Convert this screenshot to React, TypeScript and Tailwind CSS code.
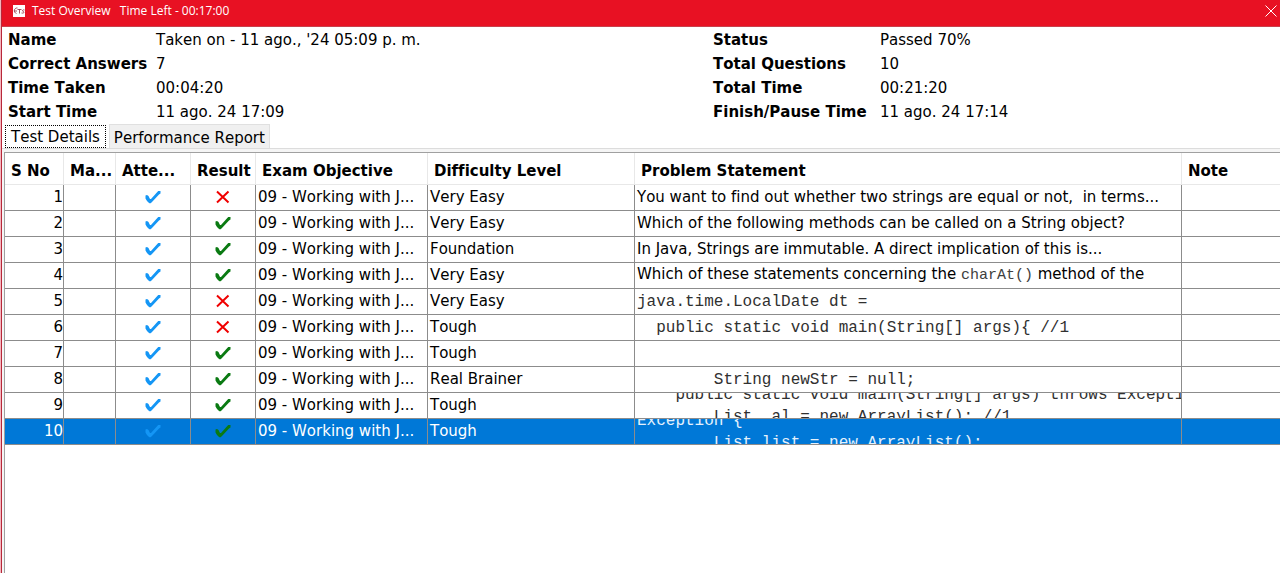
import { useState } from "react";

type Row = {
  no: number;
  passed: boolean;
  level: string;
  statement?: React.ReactNode;
  code?: string;
};

const OBJECTIVE = "09 - Working with J...";

const rows: Row[] = [
  { no: 1, passed: false, level: "Very Easy", statement: "You want to find out whether two strings are equal or not,  in terms..." },
  { no: 2, passed: true, level: "Very Easy", statement: "Which of the following methods can be called on a String object?" },
  { no: 3, passed: true, level: "Foundation", statement: "In Java, Strings are immutable. A direct implication of this is..." },
  {
    no: 4,
    passed: true,
    level: "Very Easy",
    statement: (
      <>
        Which of these statements concerning the <code className="font-['Liberation_Mono',monospace] text-[15px] text-[#404040]">charAt()</code> method of the
      </>
    ),
  },
  { no: 5, passed: false, level: "Very Easy", code: "java.time.LocalDate dt =" },
  { no: 6, passed: false, level: "Tough", code: "  public static void main(String[] args){ //1" },
  { no: 7, passed: true, level: "Tough" },
  { no: 8, passed: true, level: "Real Brainer", code: "        String newStr = null;" },
  {
    no: 9,
    passed: true,
    level: "Tough",
    code: "    public static void main(String[] args) throws Exception {\n        List  al = new ArrayList(); //1",
  },
  { no: 10, passed: true, level: "Tough", code: "Exception {\n        List list = new ArrayList();" },
];

const leftFacts = [
  ["Name", "Taken on - 11 ago., '24 05:09 p. m."],
  ["Correct Answers", "7"],
  ["Time Taken", "00:04:20"],
  ["Start Time", "11 ago. 24 17:09"],
];

const rightFacts = [
  ["Status", "Passed 70%"],
  ["Total Questions", "10"],
  ["Total Time", "00:21:20"],
  ["Finish/Pause Time", "11 ago. 24 17:14"],
];

function Tick({ className, label }: { className: string; label: string }) {
  return (
    <svg role="img" aria-label={label} width="16" height="14" viewBox="0 0 16 14" className={`mx-auto mb-[2px] block ${className}`} fill="currentColor">
      <path d="M.5 5.500L2 5l1.500 1L5 9h1L13.200 1H15.500v2.500L14 4.500 6.500 12.500 5 13.500 3.500 12.500 2 11 .5 8.500z" />
    </svg>
  );
}

function Cross() {
  return (
    <svg role="img" aria-label="Wrong" width="14" height="14" viewBox="0 0 14 14" className="mx-auto mb-[2px] block text-[#f00000]" fill="none" stroke="currentColor" strokeWidth="2">
      <path d="M1 1.500l11.500 11M12.500 1.500L1 12.500" />
    </svg>
  );
}

function Facts({ items, labelWidth }: { items: string[][]; labelWidth: string }) {
  return (
    <dl>
      {items.map(([label, value]) => (
        <div key={label} className="flex h-6 items-center whitespace-nowrap">
          <dt className={`shrink-0 font-bold ${labelWidth}`}>{label}</dt>
          <dd>{value}</dd>
        </div>
      ))}
    </dl>
  );
}

export default function App() {
  const [tab, setTab] = useState(0);
  const [selected, setSelected] = useState(10);
  return (
    <div className="bg-[#f3b6bd] pl-px font-['DejaVu_Sans',sans-serif] text-[15px] text-black [font-kerning:none] [font-variant-ligatures:none]">
      <div className="flex min-h-screen flex-col border-l border-[#b8283a] bg-white">
        <header className="flex h-[27px] items-center border-b border-[#c9404c] bg-[#e81123] pb-1 pl-[11px] font-['Open_Sans',sans-serif] text-xs text-white">
          <svg width="12" height="12" viewBox="0 0 12 12" aria-hidden="true">
            <rect width="12" height="12" fill="#fff" />
            <path d="M4.500 3C1 2.500 0 7.500 3.500 8.500M1 6h3M4.500 4.500h4M6.500 4.500v4M11.500 5c-2-.5-2.800 1-1.200 1.500s.5 2-1.800 1.500" fill="none" stroke="#8c2c3c" strokeWidth=".8" />
          </svg>
          <h1 className="ml-[7px] whitespace-pre">Test Overview   Time Left - 00:17:00</h1>
          <button aria-label="Close" className="mr-[3px] ml-auto">
            <svg width="12" height="12" viewBox="0 0 12 12" fill="none" stroke="#fff">
              <path d="M.5 .5l11 11M11.500 .5l-11 11" />
            </svg>
          </button>
        </header>

        <section className="grid grid-cols-[705fr_567fr] pt-px pl-[6px]">
          <Facts items={leftFacts} labelWidth="w-[148px]" />
          <Facts items={rightFacts} labelWidth="w-[167px]" />
        </section>

        <div role="tablist" className="flex h-[25px] items-end border-b border-[#dcdcdc] pl-[3px]">
          {["Test Details", "Performance Report"].map((name, i) => (
            <button
              key={name}
              role="tab"
              aria-selected={tab === i}
              onClick={() => setTab(i)}
              className={
                tab === i
                  ? "mr-[3px] h-[23px] border border-dotted border-black px-[5px] leading-[22px]"
                  : "h-6 border border-b-0 border-[#e0e0e0] bg-[#f0f0f0] px-1 pt-[2px] leading-[22px]"
              }
            >
              {name}
            </button>
          ))}
        </div>

        <main className="flex grow flex-col bg-[#f5f5f5] pt-[3px] pl-[2px]">
          <div className="grow overflow-hidden border-t border-l border-[#a0a0a0] bg-white">
            <table className="w-full table-fixed border-separate border-spacing-0">
              <colgroup>
                <col className="w-[59px]" />
                <col className="w-[52px]" />
                <col className="w-[75px]" />
                <col className="w-[65px]" />
                <col className="w-[172px]" />
                <col className="w-[207px]" />
                <col className="w-[547px]" />
                <col />
              </colgroup>
              <thead>
                <tr className="h-8">
                  {["S No", "Ma...", "Atte...", "Result", "Exam Objective", "Difficulty Level", "Problem Statement", "Note"].map((h) => (
                    <th key={h} scope="col" className="border-r border-b border-[#e8e8e8] px-[6px] pt-[6px] text-left font-bold whitespace-nowrap last:border-r-0">
                      {h}
                    </th>
                  ))}
                </tr>
              </thead>
              <tbody>
                {rows.map((r) => {
                  const on = r.no === selected;
                  const td = "h-[26px] overflow-hidden border-r border-b border-[#8c8c8c] p-0 whitespace-nowrap last:border-r-0";
                  return (
                    <tr key={r.no} onClick={() => setSelected(r.no)} className={on ? "bg-[#0078d7] text-white" : "bg-white"}>
                      <td className={`${td} text-right`}>{r.no}</td>
                      <td className={td} />
                      <td className={td}>
                        <Tick label="Attempted" className="text-[#1496f5]" />
                      </td>
                      <td className={td}>{r.passed ? <Tick label="Correct" className="text-[#0a7a12]" /> : <Cross />}</td>
                      <td className={`${td} pl-[2px]`}>{OBJECTIVE}</td>
                      <td className={`${td} pl-[2px]`}>{r.level}</td>
                      <td className={`${td} pl-[2px]`}>
                        {r.code ? (
                          <div className="flex h-[25px] items-center overflow-hidden">
                            <pre className={`font-['Liberation_Mono',monospace] text-[16px] leading-[22px] ${on ? "text-[#e4f1fc]" : "text-[#303030]"}`}>{r.code}</pre>
                          </div>
                        ) : (
                          <span className="whitespace-pre">{r.statement}</span>
                        )}
                      </td>
                      <td className={td} />
                    </tr>
                  );
                })}
              </tbody>
            </table>
          </div>
        </main>
      </div>
    </div>
  );
}
